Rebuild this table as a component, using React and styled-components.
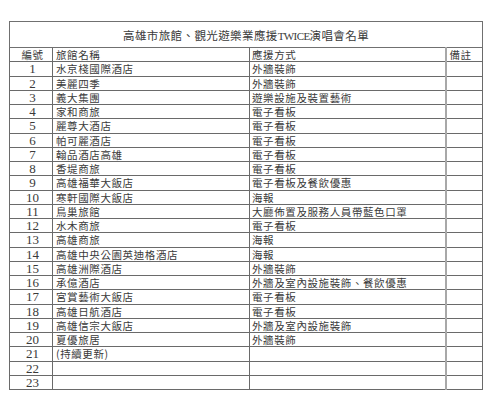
import React from "react";
import styled, { createGlobalStyle } from "styled-components";

const rows = [
  ["水京棧國際酒店", "外牆裝飾"],
  ["美麗四季", "外牆裝飾"],
  ["義大集團", "遊樂設施及裝置藝術"],
  ["家和商旅", "電子看板"],
  ["麗尊大酒店", "電子看板"],
  ["帕可麗酒店", "電子看板"],
  ["翰品酒店高雄", "電子看板"],
  ["香堤商旅", "電子看板"],
  ["高雄福華大飯店", "電子看板及餐飲優惠"],
  ["寒軒國際大飯店", "海報"],
  ["鳥巢旅館", "大廳佈置及服務人員帶藍色口罩"],
  ["水木商旅", "電子看板"],
  ["高雄商旅", "海報"],
  ["高雄中央公園英迪格酒店", "海報"],
  ["高雄洲際酒店", "外牆裝飾"],
  ["承億酒店", "外牆及室內設施裝飾、餐飲優惠"],
  ["宮賞藝術大飯店", "電子看板"],
  ["高雄日航酒店", "電子看板"],
  ["高雄信宗大飯店", "外牆及室內設施裝飾"],
  ["夏優旅居", "外牆裝飾"],
  ["(持續更新)", ""],
  ["", ""],
  ["", ""],
];

const GlobalStyle = createGlobalStyle`
  body {
    margin: 0;
    background: #ffffff;
    font-family: "Liberation Serif", "Noto Sans CJK TC", serif;
  }
`;

const Page = styled.div`
  padding: 21px 0 0 9px;
`;

const Table = styled.table`
  border-collapse: collapse;
  table-layout: fixed;
  width: 473px;
  color: #3a3a3a;
`;

const Title = styled.th`
  height: 25px;
  border: 1px solid #707070;
  font-family: "Noto Sans CJK TC", sans-serif;
  font-weight: 400;
  font-size: 11.5px;
  letter-spacing: 0.4px;
  text-align: center;
  padding: 0;
`;

const Latin = styled.span`
  font-family: "Liberation Serif", serif;
  font-size: 11px;
  letter-spacing: -0.6px;
`;

const Cell = styled.td`
  height: 13.25px;
  padding: 0 0 0 ${(p) => p.$pad || 3}px;
  border: 1px solid #6a6a6a;
  border-right: ${(p) => (p.$soft ? "2px solid #a8a8a8" : "1px solid #6a6a6a")};
  font-family: ${(p) =>
    p.$num ? '"Liberation Serif", serif' : '"Noto Sans CJK TC", sans-serif'};
  font-size: ${(p) => (p.$num ? "13px" : "10.5px")};
  letter-spacing: ${(p) => (p.$num ? "0" : "0.6px")};
  text-align: ${(p) => (p.$num ? "center" : "left")};
  line-height: 13px;
  white-space: nowrap;
  overflow: hidden;
  vertical-align: middle;
`;

const HeadCell = styled(Cell)`
  font-family: "Noto Sans CJK TC", sans-serif;
  font-size: 10.5px;
  letter-spacing: 0.6px;
`;

export default function App() {
  return (
    <Page>
      <GlobalStyle />
      <Table>
        <colgroup>
          <col style={{ width: 43 }} />
          <col style={{ width: 197 }} />
          <col style={{ width: 196 }} />
          <col style={{ width: 37 }} />
        </colgroup>
        <thead>
          <tr>
            <Title colSpan={4}>
              高雄市旅館、觀光遊樂業應援<Latin>TWICE</Latin>演唱會名單
            </Title>
          </tr>
        </thead>
        <tbody>
          <tr>
            <HeadCell $num $pad={0}>編號</HeadCell>
            <HeadCell>旅館名稱</HeadCell>
            <HeadCell $soft $pad={2}>應援方式</HeadCell>
            <HeadCell>備註</HeadCell>
          </tr>
          {rows.map(([name, way], i) => (
            <tr key={i}>
              <Cell $num $pad={0}>{i + 1}</Cell>
              <Cell>{name}</Cell>
              <Cell $soft $pad={2}>{way}</Cell>
              <Cell />
            </tr>
          ))}
        </tbody>
      </Table>
    </Page>
  );
}
